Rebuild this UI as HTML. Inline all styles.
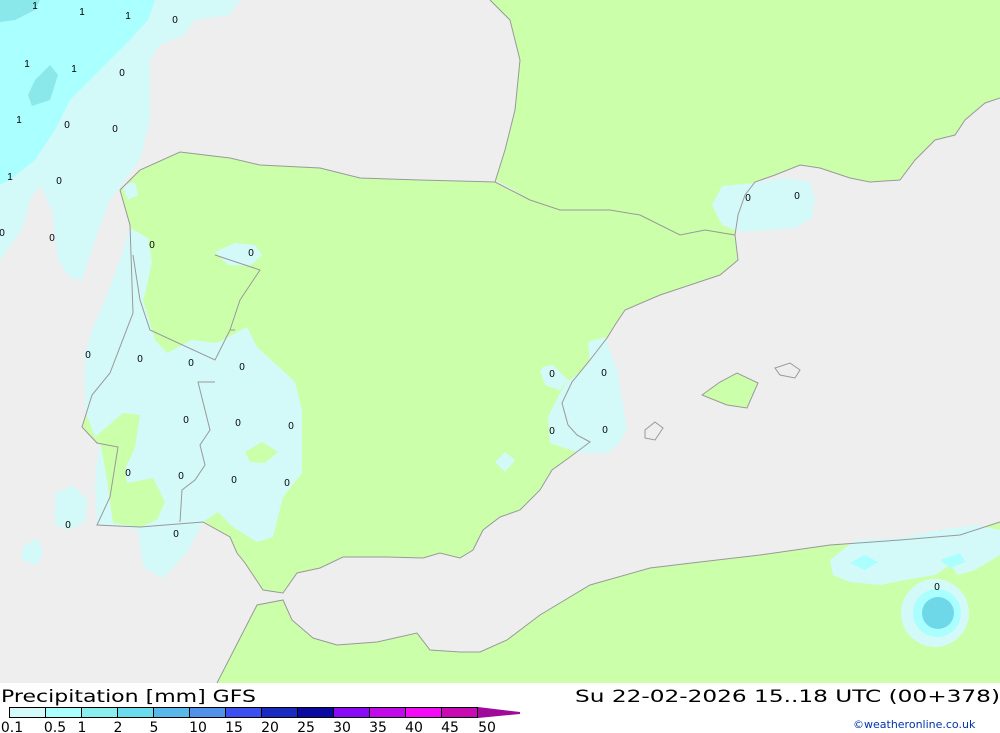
<!DOCTYPE html>
<html><head><style>
body{margin:0;width:1000px;height:733px;overflow:hidden;background:#fff;font-family:"DejaVu Sans","Liberation Sans",sans-serif}
svg{display:block}
</style></head><body>
<svg width="1000" height="733" viewBox="0 0 1000 733">
<rect x="0" y="0" width="1000" height="683" fill="#eeeeee"/>
<!-- rain over sea NW -->
<path d="M0 0 L240 0 L230 15 L195 20 L185 35 L160 45 L150 60 L150 120 L140 160 L110 200 L95 240 L82 280 L70 278 L58 260 L52 210 L40 185 L30 200 L22 230 L0 260 Z" fill="#d4f9f9"/>
<path d="M0 0 L155 0 L148 20 L125 45 L95 75 L70 100 L55 130 L35 160 L10 180 L0 185 Z" fill="#aaffff"/>
<path d="M0 0 L40 0 L35 10 L15 20 L0 22 Z" fill="#8ae8ea"/>
<path d="M50 65 L58 75 L50 100 L32 106 L28 95 L35 80 Z" fill="#8ae8ea"/>
<!-- France land -->
<path d="M490 0 L1000 0 L1000 98 L985 103 L965 120 L955 135 L935 140 L915 160 L900 180 L870 182 L850 178 L820 168 L800 165 L775 175 L755 182 L745 195 L738 215 L735 235 L705 232 L680 235 L640 215 L610 210 L560 210 L530 200 L505 185 L495 180 L505 150 L515 110 L520 60 L510 20 Z" fill="#ccffaa"/>
<!-- Iberia land -->
<path d="M120 190 L140 170 L180 152 L230 158 L260 165 L320 168 L360 178 L420 180 L495 182 L530 200 L560 210 L610 210 L640 215 L680 235 L705 230 L735 235 L738 260 L720 275 L690 285 L660 295 L625 310 L615 325 L607 338 L590 360 L572 382 L562 403 L568 425 L577 435 L590 442 L570 457 L552 470 L540 490 L520 510 L500 517 L483 530 L473 550 L460 558 L440 553 L423 558 L387 557 L343 557 L320 568 L297 573 L283 593 L263 590 L245 563 L237 553 L230 537 L203 522 L140 527 L97 525 L110 497 L118 447 L97 443 L82 427 L92 395 L110 373 L133 313 L130 225 Z" fill="#ccffaa"/>
<!-- Balearics -->
<path d="M702 395 L720 382 L737 373 L758 383 L747 408 L727 405 Z" fill="#ccffaa" stroke="#999"/>
<path d="M775 368 L790 363 L800 370 L795 378 L780 375 Z" fill="#eeeeee" stroke="#999" stroke-width="1"/>
<path d="M645 430 L655 422 L663 428 L655 440 L645 438 Z" fill="#eeeeee" stroke="#999" stroke-width="1"/>
<!-- Africa -->
<path d="M217 683 L257 605 L283 600 L292 620 L313 638 L337 645 L377 642 L417 633 L430 650 L460 652 L480 652 L507 640 L540 615 L590 585 L650 568 L700 562 L760 555 L830 545 L900 540 L960 535 L1000 522 L1000 683 Z" fill="#ccffaa"/>
<!-- Portugal rain -->
<path d="M130 228 L148 238 L152 262 L146 290 L143 300 L155 340 L167 353 L192 340 L217 343 L247 327 L257 347 L280 368 L295 382 L302 410 L302 473 L283 497 L273 537 L257 542 L233 527 L218 512 L203 522 L187 553 L163 578 L143 567 L138 530 L125 527 L97 525 L95 480 L100 440 L95 437 L85 410 L85 355 L92 330 L105 300 L120 260 Z" fill="#d4f9f9"/>
<path d="M95 437 L123 413 L140 415 L135 447 L125 470 L127 483 L153 478 L165 502 L157 520 L140 527 L113 523 L107 480 L100 440 Z" fill="#ccffaa"/>
<path d="M245 452 L262 442 L278 452 L265 463 L250 462 Z" fill="#ccffaa"/>
<path d="M55 493 L73 485 L87 500 L85 522 L70 530 L55 525 Z" fill="#d4f9f9"/>
<path d="M22 548 L37 538 L43 552 L37 565 L22 560 Z" fill="#d4f9f9"/>
<path d="M215 252 L235 243 L255 245 L262 255 L250 266 L228 265 Z" fill="#d4f9f9"/>
<path d="M122 185 L135 182 L138 195 L128 200 Z" fill="#d4f9f9"/>
<!-- Valencia rain -->
<path d="M588 342 L605 337 L617 370 L627 428 L620 443 L607 453 L580 453 L550 443 L548 417 L560 393 L568 380 L553 365 L543 367 L540 373 L560 384 L570 380 L590 363 Z" fill="#d4f9f9"/>
<path d="M540 370 L552 365 L568 380 L560 390 L545 385 Z" fill="#d4f9f9"/>
<path d="M495 462 L505 452 L515 460 L505 472 Z" fill="#d4f9f9"/>
<!-- Gulf of Lion -->
<path d="M712 205 L722 186 L755 183 L785 178 L810 182 L815 200 L812 218 L795 228 L770 230 L740 232 L722 225 Z" fill="#d4f9f9"/>
<!-- Algeria rain -->
<path d="M830 560 L855 540 L900 538 L940 530 L975 525 L1000 530 L1000 555 L975 570 L958 575 L950 565 L935 575 L905 580 L880 585 L850 582 L833 575 Z" fill="#d4f9f9"/>
<path d="M850 563 L865 555 L878 562 L865 570 Z" fill="#aaffff"/>
<path d="M940 560 L960 553 L965 562 L950 568 Z" fill="#aaffff"/>
<circle cx="935" cy="613" r="34" fill="#d4f9f9"/>
<circle cx="937" cy="613" r="24" fill="#aaffff"/>
<circle cx="938" cy="613" r="16" fill="#6ed8e8"/>
<!-- coast lines -->
<g fill="none" stroke="#999" stroke-width="1">
<path d="M120 190 L140 170 L180 152 L230 158 L260 165 L320 168 L360 178 L420 180 L495 182 L505 150 L515 110 L520 60 L510 20 L490 0"/>
<path d="M495 182 L530 200 L560 210 L610 210 L640 215 L680 235 L705 230 L735 235 L738 215 L745 195 L755 182 L775 175 L800 165 L820 168 L850 178 L870 182 L900 180 L915 160 L935 140 L955 135 L965 120 L985 103 L1000 98"/>
<path d="M735 235 L738 260 L720 275 L690 285 L660 295 L625 310 L615 325 L607 338 L590 360 L572 382 L562 403 L568 425 L577 435 L590 442 L570 457 L552 470 L540 490 L520 510 L500 517 L483 530 L473 550 L460 558 L440 553 L423 558 L387 557 L343 557 L320 568 L297 573 L283 593 L263 590 L245 563 L237 553 L230 537 L203 522 L140 527 L97 525 L110 497 L118 447 L97 443 L82 427 L92 395 L110 373 L133 313 L130 225 L120 190"/>
<path d="M217 683 L257 605 L283 600 L292 620 L313 638 L337 645 L377 642 L417 633 L430 650 L460 652 L480 652 L507 640 L540 615 L590 585 L650 568 L700 562 L760 555 L830 545 L900 540 L960 535 L1000 522"/>
<path d="M133 255 L140 300 L150 330 L215 360 L230 330 L235 330 M215 255 L260 270 L240 300 L230 330 M215 382 L198 382 L205 410 L210 430 L200 445 L205 465 L195 480 L182 490 L180 522"/>
</g>
<g font-family="Liberation Sans,sans-serif" font-size="10" fill="#000" text-anchor="middle">
<text x="35" y="9">1</text><text x="82" y="15">1</text><text x="128" y="19">1</text><text x="175" y="23">0</text>
<text x="27" y="67">1</text><text x="74" y="72">1</text><text x="122" y="76">0</text>
<text x="19" y="123">1</text><text x="67" y="128">0</text><text x="115" y="132">0</text>
<text x="10" y="180">1</text><text x="59" y="184">0</text>
<text x="2" y="236">0</text><text x="52" y="241">0</text><text x="152" y="248">0</text><text x="251" y="256">0</text>
<text x="88" y="358">0</text><text x="140" y="362">0</text><text x="191" y="366">0</text><text x="242" y="370">0</text>
<text x="186" y="423">0</text><text x="238" y="426">0</text><text x="291" y="429">0</text>
<text x="128" y="476">0</text><text x="181" y="479">0</text><text x="234" y="483">0</text><text x="287" y="486">0</text>
<text x="68" y="528">0</text><text x="176" y="537">0</text>
<text x="552" y="377">0</text><text x="604" y="376">0</text><text x="552" y="434">0</text><text x="605" y="433">0</text>
<text x="748" y="201">0</text><text x="797" y="199">0</text><text x="937" y="590">0</text>
</g>
<!-- legend -->
<g font-family="DejaVu Sans,sans-serif" fill="#000">
<text x="1" y="702" font-size="17" textLength="255" lengthAdjust="spacingAndGlyphs">Precipitation [mm] GFS</text>
<text x="575" y="702" font-size="17" textLength="425" lengthAdjust="spacingAndGlyphs">Su 22-02-2026 15..18 UTC (00+378)</text>
<text x="853" y="728" font-size="11" fill="#0033aa">©weatheronline.co.uk</text>
</g>
<g stroke="#000" stroke-width="1">
<rect x="9.5" y="707.5" width="36" height="10" fill="#d4f9f9"/>
<rect x="45.5" y="707.5" width="36" height="10" fill="#aaffff"/>
<rect x="81.5" y="707.5" width="36" height="10" fill="#8aeeee"/>
<rect x="117.5" y="707.5" width="36" height="10" fill="#6adcee"/>
<rect x="153.5" y="707.5" width="36" height="10" fill="#58b8ea"/>
<rect x="189.5" y="707.5" width="36" height="10" fill="#5092ea"/>
<rect x="225.5" y="707.5" width="36" height="10" fill="#3c50f0"/>
<rect x="261.5" y="707.5" width="36" height="10" fill="#1a2cc0"/>
<rect x="297.5" y="707.5" width="36" height="10" fill="#0a0aa0"/>
<rect x="333.5" y="707.5" width="36" height="10" fill="#8a0af5"/>
<rect x="369.5" y="707.5" width="36" height="10" fill="#c00ae8"/>
<rect x="405.5" y="707.5" width="36" height="10" fill="#f50af5"/>
<rect x="441.5" y="707.5" width="36" height="10" fill="#c80ab4"/>
</g>
<path d="M478 707 L478 718 L520 714 L520 712 Z" fill="#a00a9a"/>
<g font-family="DejaVu Sans,sans-serif" font-size="14" fill="#000" text-anchor="middle">
<text x="12" y="732">0.1</text><text x="55" y="732">0.5</text><text x="82" y="732">1</text><text x="118" y="732">2</text><text x="154" y="732">5</text><text x="198" y="732">10</text><text x="234" y="732">15</text><text x="270" y="732">20</text><text x="306" y="732">25</text><text x="342" y="732">30</text><text x="378" y="732">35</text><text x="414" y="732">40</text><text x="450" y="732">45</text><text x="487" y="732">50</text>
</g>
</svg>
</body></html>
